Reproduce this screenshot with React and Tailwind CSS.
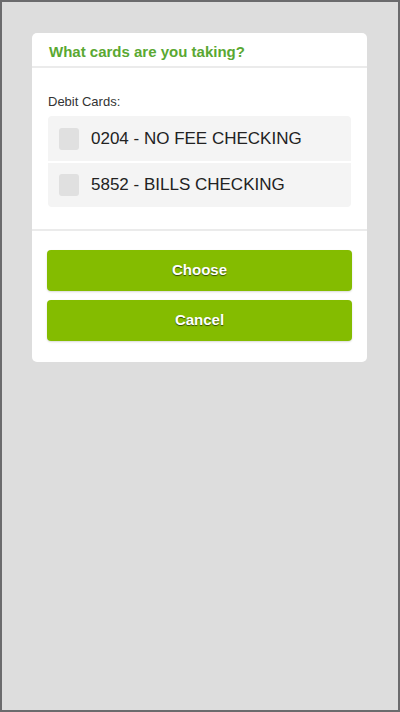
const cards = ['0204 - NO FEE CHECKING', '5852 - BILLS CHECKING'];

export default function App() {
  return (
    <div
      className="w-[400px] h-[712px] border-2 border-[#6b6b6d] bg-[#dddddd] pt-[31px] px-[30px]"
      style={{ fontFamily: '"Liberation Sans", Arial, sans-serif' }}
    >
      <div className="w-[335px] bg-white rounded-[5px]">
        {/* Header */}
        <div className="h-[35px] flex items-center pt-[5px] px-[17px] border-b-2 border-[#ebebeb]">
          <h1 className="text-[15px] font-bold text-[#5aa832]">What cards are you taking?</h1>
        </div>

        {/* Body */}
        <div className="px-4 pt-[26px] pb-[22px] border-b-2 border-[#ebebeb]">
          <p className="text-[13px] text-[#333] leading-4 mb-[6px]">Debit Cards:</p>
          <div className="bg-[#f4f4f4] rounded-[4px]">
            {cards.map((c, i) => (
              <div
                key={c}
                className={`flex items-center pl-[11px] ${i > 0 ? 'border-t-2 border-white h-[46px]' : 'h-[45px]'}`}
              >
                <span className="w-[20px] h-[22px] rounded-[3px] bg-[#e0e0e0] mr-[12px]" />
                <span className="text-[17px] text-[#222]">{c}</span>
              </div>
            ))}
          </div>
        </div>

        {/* Actions */}
        <div className="px-[15px] pt-[19px] pb-[21px] flex flex-col gap-[9px]">
          {['Choose', 'Cancel'].map((b) => (
            <button
              key={b}
              className="h-[41px] rounded-[4px] bg-[#84bc00] text-white text-[15px] font-bold shadow-[0_1px_2px_rgba(0,0,0,0.15)] [text-shadow:0_1px_1px_rgba(0,0,0,0.6)]"
            >
              {b}
            </button>
          ))}
        </div>
      </div>
    </div>
  );
}
